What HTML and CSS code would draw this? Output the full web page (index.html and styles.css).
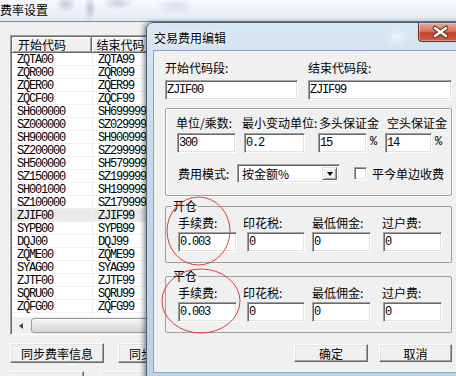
FILE: index.html
```html
<!DOCTYPE html>
<html lang="zh">
<head>
  <meta charset="UTF-8" />
  <title>费率设置</title>
  <link rel="stylesheet" href="styles.css">
</head>
<body>
<div class="screen">

<!-- main window: 费率设置 -->
<div class="mainwin">
  <div class="glass"><span class="wintitle">费率设置</span></div>
  <div class="winbody">
    <div class="listview">
      <div class="lv-head">
        <div class="hcell c1">开始代码</div>
        <div class="hcell c2">结束代码</div>
      </div>
      <div class="lv-rows">
        <div class="row"><span class="c1">ZQTA00</span><span class="c2">ZQTA99</span></div>
        <div class="row"><span class="c1">ZQR000</span><span class="c2">ZQR099</span></div>
        <div class="row"><span class="c1">ZQER00</span><span class="c2">ZQER99</span></div>
        <div class="row"><span class="c1">ZQCF00</span><span class="c2">ZQCF99</span></div>
        <div class="row"><span class="c1">SH600000</span><span class="c2">SH699999</span></div>
        <div class="row"><span class="c1">SZ000000</span><span class="c2">SZ029999</span></div>
        <div class="row"><span class="c1">SH900000</span><span class="c2">SH900999</span></div>
        <div class="row"><span class="c1">SZ200000</span><span class="c2">SZ299999</span></div>
        <div class="row"><span class="c1">SH500000</span><span class="c2">SH579999</span></div>
        <div class="row"><span class="c1">SZ150000</span><span class="c2">SZ199999</span></div>
        <div class="row"><span class="c1">SH001000</span><span class="c2">SH199999</span></div>
        <div class="row"><span class="c1">SZ100000</span><span class="c2">SZ179999</span></div>
        <div class="row sel"><span class="c1">ZJIF00</span><span class="c2">ZJIF99</span></div>
        <div class="row"><span class="c1">SYPB00</span><span class="c2">SYPB99</span></div>
        <div class="row"><span class="c1">DQJ00</span><span class="c2">DQJ99</span></div>
        <div class="row"><span class="c1">ZQME00</span><span class="c2">ZQME99</span></div>
        <div class="row"><span class="c1">SYAG00</span><span class="c2">SYAG99</span></div>
        <div class="row"><span class="c1">ZJTF00</span><span class="c2">ZJTF99</span></div>
        <div class="row"><span class="c1">SQRU00</span><span class="c2">SQRU99</span></div>
        <div class="row"><span class="c1">ZQFG00</span><span class="c2">ZQFG99</span></div>
        <div class="row"><span class="c1"></span><span class="c2"></span></div>
      </div>
      <div class="hscroll">
        <div class="sb-btn"><span class="tri-left"></span></div>
        <div class="sb-thumb"></div>
      </div>
    </div>
    <div class="btnrow">
      <button class="btn wide">同步费率信息</button>
      <button class="btn wide">同步费率设置</button>
    </div>
    <div class="btnrow">
      <button class="btn small"></button>
      <button class="btn small"></button>
    </div>
  </div>
</div>

<!-- dialog: 交易费用编辑 -->
<div class="dialog">
  <div class="dlg-title">
    <span class="dlg-caption">交易费用编辑</span>
    <div class="close">
      <svg width="43" height="19" viewBox="0 0 43 19">
        <path d="M16 5 L27 13 M27 5 L16 13" stroke="#5a2a22" stroke-width="4.6" stroke-linecap="round" fill="none"/>
        <path d="M16 5 L27 13 M27 5 L16 13" stroke="#fff" stroke-width="2.6" stroke-linecap="round" fill="none"/>
      </svg>
    </div>
  </div>
  <div class="client">
    <div class="inner">
      <div class="pair">
        <div class="col code1">
          <span class="lbl">开始代码段:</span>
          <input class="field" value="ZJIF00">
        </div>
        <div class="col code2">
          <span class="lbl">结束代码段:</span>
          <input class="field" value="ZJIF99">
        </div>
      </div>

      <div class="group">
        <div class="g-grid">
          <div class="col">
            <span class="lbl la">单位/乘数:</span>
            <input class="field w59" value="300">
          </div>
          <div class="col">
            <span class="lbl lb">最小变动单位:</span>
            <input class="field w61" value="0.2">
          </div>
          <div class="col">
            <span class="lbl lc">多头保证金</span>
            <div class="pct"><input class="field w49" value="15"><span class="mono">%</span></div>
          </div>
          <div class="col">
            <span class="lbl ld">空头保证金</span>
            <div class="pct"><input class="field w47" value="14"><span class="mono">%</span></div>
          </div>
        </div>
        <div class="moderow">
          <span class="mode-lbl">费用模式:</span>
          <div class="combo">
            <span class="combo-text">按金额%</span>
            <span class="combo-btn"><span class="tri-down"></span></span>
          </div>
          <span class="check"></span>
          <span>平今单边收费</span>
        </div>
      </div>

      <fieldset class="fs first">
        <legend>开仓</legend>
        <div class="f-grid">
          <div class="col"><span class="lbl">手续费:</span><input class="field w59" value="0.003"></div>
          <div class="col"><span class="lbl l2">印花税:</span><input class="field w58 i2" value="0"></div>
          <div class="col"><span class="lbl">最低佣金:</span><input class="field w59" value="0"></div>
          <div class="col"><span class="lbl l4">过户费:</span><input class="field w59" value="0"></div>
        </div>
      </fieldset>

      <fieldset class="fs second">
        <legend>平仓</legend>
        <div class="f-grid">
          <div class="col"><span class="lbl">手续费:</span><input class="field w59" value="0.003"></div>
          <div class="col"><span class="lbl l2">印花税:</span><input class="field w58 i2" value="0"></div>
          <div class="col"><span class="lbl">最低佣金:</span><input class="field w59" value="0"></div>
          <div class="col"><span class="lbl l4">过户费:</span><input class="field w59" value="0"></div>
        </div>
      </fieldset>

      <div class="dlg-btns">
        <button class="btn ok">确定</button>
        <button class="btn cancel">取消</button>
      </div>
    </div>
  </div>
</div>

<!-- red hand-drawn marks -->
<svg class="marks" width="456" height="376" viewBox="0 0 456 376">
  <ellipse cx="198.5" cy="231" rx="31.5" ry="34" fill="none" stroke="#e23c3c" stroke-width="1"/>
  <ellipse cx="201" cy="301" rx="39" ry="32" fill="none" stroke="#e23c3c" stroke-width="1"/>
</svg>

</div>
</body>
</html>
```

FILE: styles.css
```css
* {
  box-sizing: border-box;
}
body {
  margin: 0;
  font-family: "Noto Sans CJK SC", sans-serif;
  font-size: 12px;
  color: #000;
}
.screen {
  position: relative;
  width: 456px;
  height: 376px;
  overflow: hidden;
  background: #f0f0f0;
}
.mono {
  font-family: "Liberation Mono", monospace;
  font-size: 12px;
  letter-spacing: -1.2px;
}

/* main window */
.glass {
  height: 22px;
  border-bottom: 1px solid #7f8b98;
  background:
    radial-gradient(ellipse 10px 9px at 66px 4px, rgba(110,120,135,.35), transparent),
    radial-gradient(ellipse 6px 14px at 90px 8px, rgba(100,110,125,.35), transparent),
    radial-gradient(ellipse 16px 7px at 118px 3px, rgba(110,120,135,.3), transparent),
    radial-gradient(ellipse 20px 8px at 175px 6px, rgba(140,155,175,.25), transparent),
    linear-gradient(#f8fafd, #e2eaf3);
}
.wintitle {
  display: block;
  margin-left: 0;
  line-height: 20px;
}
.winbody {
  padding: 13px 0 0 10px;
}
.listview {
  width: 220px;
  background: #fff;
  border: 1px solid;
  border-color: #a0a0a0 #fff #fff #a0a0a0;
  box-shadow: inset 1px 1px #696969;
  padding: 1px 0 0 1px;
}
.lv-head {
  display: flex;
  height: 16px;
}
.hcell {
  height: 16px;
  line-height: 15px;
  background: #f0f0f0;
  border-right: 1px solid #696969;
  border-bottom: 1px solid #696969;
  box-shadow: inset 1px 1px #fff, inset -1px -1px #a0a0a0;
}
.hcell.c1 {
  width: 81px;
  padding-left: 6px;
}
.hcell.c2 {
  width: 140px;
  padding-left: 5px;
}
.lv-rows {
  height: 264px;
  overflow: hidden;
}
.row {
  display: flex;
  height: 13px;
  border-bottom: 1px solid #f0f0f0;
  font-family: "Liberation Mono", monospace;
  font-size: 12px;
  letter-spacing: -1.2px;
}
.row span {
  padding: 3px 0 0 5px;
  line-height: 9px;
}
.row .c1 {
  width: 81px;
  border-right: 1px solid #f0f0f0;
}
.row.sel {
  background: #e9e9e9;
}
.hscroll {
  display: flex;
  height: 17px;
  background: #eaeaea;
}
.sb-btn {
  width: 18px;
  display: flex;
  align-items: center;
  justify-content: center;
  background: #f0f0f0;
}
.tri-left {
  width: 0;
  height: 0;
  border-top: 3px solid transparent;
  border-bottom: 3px solid transparent;
  border-right: 4px solid #444;
}
.sb-thumb {
  flex: 1;
  margin: 1px 0 1px 1px;
  border: 1px solid #9b9b9b;
  border-radius: 3px;
  background: linear-gradient(#f7f7f7, #e4e4e4 50%, #d6d6d6);
}
.btnrow {
  display: flex;
  gap: 14px;
  margin-top: 8px;
}
.btn {
  height: 20px;
  padding: 0;
  font-family: "Noto Sans CJK SC", sans-serif;
  font-size: 12px;
  color: #000;
  background: #f0f0f0;
  border: 1px solid;
  border-color: #fff #696969 #696969 #fff;
  box-shadow: inset -1px -1px #a0a0a0, inset 1px 1px #e3e3e3;
}
.btn.wide {
  width: 94px;
}
.btn.small {
  width: 74px;
}
.btnrow + .btnrow {
  gap: 16px;
}

/* dialog */
.dialog {
  position: absolute;
  left: 146px;
  top: 22px;
  width: 330px;
  border: 1px solid #4f6075;
  border-radius: 7px 7px 0 0;
  padding: 0 6px 8px 6px;
  background:
    radial-gradient(ellipse 40px 8px at 150px 42px, rgba(120,135,155,.35), transparent),
    radial-gradient(ellipse 22px 6px at 222px 40px, rgba(120,135,155,.3), transparent),
    radial-gradient(ellipse 14px 10px at 250px 14px, rgba(255,255,255,.5), transparent),
    linear-gradient(#d9e6f3, #c4d7ec 40%, #bcd0e7);
  box-shadow: -2px 0 5px rgba(0,0,0,.45);
}
.dlg-title {
  display: flex;
  height: 27px;
}
.dlg-caption {
  margin: 8px 0 0 1px;
  line-height: 14px;
  text-shadow: 0 0 6px #fff, 0 0 3px #fff;
}
.close {
  width: 43px;
  height: 19px;
  margin-left: auto;
  margin-right: 8px;
  border: 1px solid #6a2a20;
  border-top: none;
  border-radius: 0 0 4px 4px;
  background: linear-gradient(#eaa898, #d9735c 45%, #c1412b 55%, #d0624a);
  box-shadow: inset 0 0 0 1px rgba(255,255,255,.35);
}
.close svg {
  display: block;
}
.client {
  background: #f0f0f0;
  border: 1px solid #8fa3bb;
  padding: 10px 0 10px 11px;
}
.inner {
  width: 287px;
}
.col {
  display: flex;
  flex-direction: column;
  align-items: flex-start;
}
.lbl {
  line-height: 14px;
  white-space: nowrap;
}
.field {
  display: block;
  height: 20px;
  margin: 0;
  padding: 0 0 0 1px;
  background: #fff;
  border: 1px solid;
  border-color: #a0a0a0 #fff #fff #a0a0a0;
  box-shadow: inset 1px 1px #696969, inset -1px -1px #e3e3e3;
  font-family: "Liberation Mono", monospace;
  font-size: 12px;
  letter-spacing: -1.2px;
  color: #000;
  outline: none;
}
.pair {
  display: flex;
  gap: 10px;
}
.pair .lbl {
  margin-bottom: 5px;
}
.code1 .field {
  width: 133px;
}
.code2 .field {
  width: 144px;
}
.w59 { width: 59px; }
.w61 { width: 61px; }
.w49 { width: 49px; }
.w47 { width: 47px; }
.w58 { width: 58px; }

.group {
  height: 88px;
  margin-top: 8px;
  border: 1px solid #a0a0a0;
  border-radius: 2px;
  box-shadow: inset 1px 1px #fff, 1px 1px #fff;
  padding: 7px 0 0 11px;
}
.g-grid {
  display: grid;
  grid-template-columns: 67px 74px 67px auto;
}
.g-grid .field {
  margin-top: 3px;
}
.la { margin-left: -1px; }
.lb { margin-left: -2px; }
.lc { margin-left: 1px; }
.ld { margin-left: 2px; }
.pct {
  display: flex;
  align-items: center;
  gap: 3px;
}
.moderow {
  display: flex;
  align-items: center;
  height: 19px;
  margin-top: 11px;
}
.mode-lbl {
  width: 60px;
  padding-left: 1px;
}
.combo {
  display: flex;
  width: 103px;
  height: 19px;
  background: #fff;
  border: 1px solid;
  border-color: #a0a0a0 #fff #fff #a0a0a0;
  box-shadow: inset 1px 1px #696969, inset -1px -1px #e3e3e3;
  padding: 2px;
}
.combo-text {
  flex: 1;
  line-height: 14px;
  padding-left: 2px;
}
.combo-btn {
  width: 15px;
  display: flex;
  align-items: center;
  justify-content: center;
  background: #f0f0f0;
  border: 1px solid;
  border-color: #e3e3e3 #696969 #696969 #e3e3e3;
  box-shadow: inset 1px 1px #fff, inset -1px -1px #a0a0a0;
}
.tri-down {
  width: 0;
  height: 0;
  border-left: 3.5px solid transparent;
  border-right: 3.5px solid transparent;
  border-top: 4px solid #000;
}
.check {
  width: 13px;
  height: 13px;
  margin: 0 5px 0 14px;
  background: #fff;
  border: 1px solid;
  border-color: #a0a0a0 #fff #fff #a0a0a0;
  box-shadow: inset 1px 1px #696969, inset -1px -1px #e3e3e3;
}

.fs {
  width: 287px;
  min-width: 0;
  margin: 3px 0 0;
  padding: 3px 0 10px 12px;
  border: 1px solid #a0a0a0;
  border-radius: 2px;
}
.fs.second {
  margin-top: 6px;
}
.fs legend {
  margin-left: -6px;
  padding: 0 1px;
  line-height: 14px;
}
.f-grid {
  display: grid;
  grid-template-columns: 67px 67px 71px auto;
}
.f-grid .field {
  margin-top: 2px;
}
.l2 { margin-left: -2px; }
.l4 { margin-left: -1px; }
.i2 { margin-left: 2px; }

.dlg-btns {
  display: flex;
  justify-content: flex-end;
  gap: 11px;
  margin-top: 11px;
}
.btn.ok {
  width: 74px;
  height: 18px;
}
.btn.cancel {
  width: 73px;
  height: 18px;
}

.marks {
  position: absolute;
  left: 0;
  top: 0;
  pointer-events: none;
}
```
